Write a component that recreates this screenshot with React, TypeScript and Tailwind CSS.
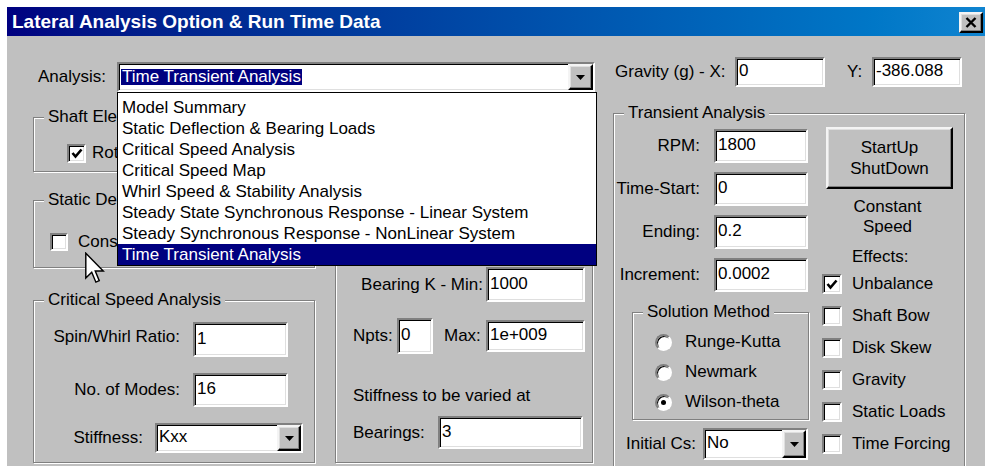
import React from "react";

// win9x style bevels
const sunken =
  "border-2 border-t-[#808080] border-l-[#808080] border-b-white border-r-white shadow-[inset_1px_1px_0_#000,inset_-1px_-1px_0_#dfdfdf]";
const raised =
  "border-2 border-t-[#f4f4f4] border-l-[#f4f4f4] border-b-black border-r-black shadow-[inset_-1px_-1px_0_#808080,inset_1px_1px_0_#dfdfdf]";

const analysisTypes = [
  "Model Summary",
  "Static Deflection & Bearing Loads",
  "Critical Speed Analysis",
  "Critical Speed Map",
  "Whirl Speed & Stability Analysis",
  "Steady State Synchronous Response - Linear System",
  "Steady Synchronous Response - NonLinear System",
  "Time Transient Analysis",
];

const transientFields = [
  ["RPM:", "1800"],
  ["Time-Start:", "0"],
  ["Ending:", "0.2"],
  ["Increment:", "0.0002"],
];

const effects = [
  { label: "Unbalance", checked: true },
  { label: "Shaft Bow", checked: false },
  { label: "Disk Skew", checked: false },
  { label: "Gravity", checked: false },
  { label: "Static Loads", checked: false },
  { label: "Time Forcing", checked: false },
];

function Field({ value, className }: { value: string; className: string }) {
  return (
    <div className={`flex items-center bg-white pl-[2px] pb-[2px] leading-[20px] ${sunken} ${className}`}>
      {value}
    </div>
  );
}

function ArrowButton({ className }: { className: string }) {
  return (
    <div className={`flex items-center justify-center bg-[#c0c0c0] ${raised} ${className}`}>
      <svg width="9" height="5" viewBox="0 0 9 5">
        <path d="M0 0H9L4.5 5Z" fill="black" />
      </svg>
    </div>
  );
}

function Combo({ value, className }: { value: string; className: string }) {
  return (
    <div className={`flex bg-white ${sunken} ${className}`}>
      <span className="flex-1 flex items-center pl-[2px] pb-[2px] leading-[20px]">{value}</span>
      <ArrowButton className="w-[24px] h-full" />
    </div>
  );
}

function Check({ checked, size }: { checked?: boolean; size: string }) {
  return (
    <div className={`flex items-center justify-center bg-white shrink-0 ${sunken} ${size}`}>
      {checked && (
        <svg width="12" height="11" viewBox="0 0 12 11">
          <path d="M1.5 5 L4.5 8.5 L10.5 1.5" fill="none" stroke="black" strokeWidth="2.6" />
        </svg>
      )}
    </div>
  );
}

function Radio({ checked }: { checked?: boolean }) {
  return (
    <div className="flex items-center justify-center w-[17px] h-[17px] rounded-full bg-white border-2 border-t-[#808080] border-l-[#808080] border-b-white border-r-white shadow-[inset_1px_1px_0_#000]">
      {checked && <div className="w-[5px] h-[5px] rounded-full bg-black" />}
    </div>
  );
}

function Group({
  title,
  className,
  children,
}: {
  title?: string;
  className: string;
  children?: React.ReactNode;
}) {
  return (
    <div className={`relative border border-[#808080] shadow-[inset_1px_1px_0_#fff,1px_1px_0_#fff] ${className}`}>
      {title && (
        <span className="absolute left-[10px] -top-[11px] bg-[#c0c0c0] px-[4px] leading-[20px]">{title}</span>
      )}
      {children}
    </div>
  );
}

export default function App() {
  return (
    <div className="w-[985px] h-[466px] bg-white pl-[7px] pt-[7px] overflow-hidden whitespace-nowrap font-['Liberation_Sans',Arial,sans-serif] text-[17px] text-black">
      <div className="flex flex-col w-[978px] h-[459px]">
        {/* title bar */}
        <div className="flex items-center justify-between h-[29px] bg-linear-to-r from-[#000080] to-[#1084d0] pl-[5px] pr-[2px]">
          <span className="text-white font-bold text-[19px] leading-[22px]">
            Lateral Analysis Option &amp; Run Time Data
          </span>
          <div className={`flex items-center justify-center w-[24px] h-[21px] mt-[2px] bg-[#c0c0c0] ${raised}`}>
            <svg width="12" height="11" viewBox="0 0 12 11">
              <path d="M1.5 1 L10.5 10 M10.5 1 L1.5 10" stroke="black" strokeWidth="2.4" />
            </svg>
          </div>
        </div>

        {/* dialog body */}
        <div className="relative flex-1 flex flex-col bg-[#c0c0c0] overflow-hidden">
          <div className="flex items-start pl-[31px] pt-[21px]">
            <span className="w-[79px] mt-[10px] leading-[20px]">Analysis:</span>
            <div className={`flex w-[478px] h-[30px] mt-[5px] bg-white ${sunken}`}>
              <div className="flex-1 flex items-center pl-[2px]">
                <span className="bg-[#000080] text-white leading-[16px] px-[1px]">Time Transient Analysis</span>
              </div>
              <ArrowButton className="w-[25px] h-full" />
            </div>
            <span className="ml-[20px] w-[120px] mt-[5px] leading-[20px]">Gravity (g) - X:</span>
            <Field value="0" className="w-[90px] h-[30px]" />
            <span className="ml-[22px] w-[25px] mt-[5px] leading-[20px]">Y:</span>
            <Field value="-386.088" className="w-[90px] h-[30px]" />
          </div>

          <div className="flex gap-[20px] pl-[26px] mt-[21px] leading-[20px]">
            {/* left column */}
            <div className="flex flex-col w-[282px] pt-[4px] shrink-0">
              <Group title="Shaft Elements" className="h-[55px]">
                <div className="flex items-center gap-[6px] pl-[33px] pt-[25px]">
                  <Check checked size="w-[19px] h-[19px]" />
                  <span className="w-[29px] overflow-hidden">Rotatory Inertia</span>
                </div>
              </Group>
              <Group title="Static Deflection" className="h-[68px] mt-[28px]">
                <div className="flex items-center gap-[10px] pl-[16px] pt-[31px]">
                  <Check size="w-[18px] h-[18px]" />
                  <span className="w-[39px] overflow-hidden">Consider Shear Deformation</span>
                </div>
              </Group>
              <Group title="Critical Speed Analysis" className="h-[163px] mt-[32px]">
                <div className="flex flex-col pt-[21px] pl-[14px]">
                  <div className="flex items-center">
                    <span className="w-[132px] text-right mb-[5px]">Spin/Whirl Ratio:</span>
                    <Field value="1" className="ml-[13px] w-[95px] h-[35px]" />
                  </div>
                  <div className="flex items-center mt-[16px]">
                    <span className="w-[132px] text-right">No. of Modes:</span>
                    <Field value="16" className="ml-[13px] w-[95px] h-[34px]" />
                  </div>
                  <div className="flex items-center mt-[16px]">
                    <span className="w-[95px] text-right">Stiffness:</span>
                    <Combo value="Kxx" className="ml-[12px] w-[148px] h-[30px]" />
                  </div>
                </div>
              </Group>
            </div>

            {/* middle column: critical speed map settings */}
            <Group className="w-[258px] h-[346px] mt-[4px] shrink-0">
              <div className="flex flex-col pl-[17px] pt-[149px]">
                <div className="flex items-center">
                  <span className="w-[130px] text-right">Bearing K - Min:</span>
                  <Field value="1000" className="ml-[3px] w-[99px] h-[35px]" />
                </div>
                <div className="flex items-center mt-[16px]">
                  <span className="w-[41px]">Npts:</span>
                  <Field value="0" className="ml-[3px] w-[36px] h-[36px]" />
                  <span className="ml-[11px] w-[39px]">Max:</span>
                  <Field value="1e+009" className="ml-[3px] w-[99px] h-[32px]" />
                </div>
                <span className="mt-[32px]">Stiffness to be varied at</span>
                <div className="flex items-center mt-[10px]">
                  <span className="w-[85px]">Bearings:</span>
                  <Field value="3" className="w-[145px] h-[33px]" />
                </div>
              </div>
            </Group>

            {/* transient analysis */}
            <Group title="Transient Analysis" className="w-[352px] h-[370px] shrink-0">
              <div className="flex pl-[12px]">
                <div className="flex flex-col w-[183px] pt-[15px]">
                  {transientFields.map(([label, value], i) => (
                    <div key={label} className={`flex items-center justify-end ${i ? "mt-[9px]" : ""}`}>
                      <span>{label}</span>
                      <Field value={value} className="ml-[14px] mr-[1px] w-[94px] h-[34px] shrink-0" />
                    </div>
                  ))}
                  <Group title="Solution Method" className="mt-[20px] ml-[6px] w-[177px] h-[108px]">
                    <div className="flex flex-col pl-[22px] pt-[14px]">
                      {["Runge-Kutta", "Newmark", "Wilson-theta"].map((m) => (
                        <div key={m} className="flex items-center gap-[13px] h-[30px]">
                          <Radio checked={m === "Wilson-theta"} />
                          <span>{m}</span>
                        </div>
                      ))}
                    </div>
                  </Group>
                  <div className="flex items-center mt-[8px]">
                    <span className="w-[77px]">Initial Cs:</span>
                    <Combo value="No" className="w-[105px] h-[32px]" />
                  </div>
                </div>

                <div className="flex flex-col ml-[13px] w-[131px] pt-[13px]">
                  <div className={`flex flex-col items-center justify-center ml-[4px] w-[127px] h-[62px] bg-[#c0c0c0] leading-[21px] ${raised}`}>
                    <span>StartUp</span>
                    <span>ShutDown</span>
                  </div>
                  <div className="flex flex-col items-center mt-[8px]">
                    <span>Constant</span>
                    <span>Speed</span>
                  </div>
                  <span className="ml-[30px] mt-[10px]">Effects:</span>
                  <div className="flex flex-col mt-[1px]">
                    {effects.map((e) => (
                      <div key={e.label} className="flex items-center gap-[10px] h-[32px]">
                        <Check checked={e.checked} size="w-[20px] h-[20px]" />
                        <span>{e.label}</span>
                      </div>
                    ))}
                  </div>
                </div>
              </div>
            </Group>
          </div>

          {/* open analysis dropdown list */}
          <div className="absolute left-[110px] top-[56px] z-10 w-[480px] h-[174px] bg-white border border-black pt-[4px] leading-[21px]">
            {analysisTypes.map((t, i) => (
              <div
                key={t}
                className={`h-[21px] px-[4px] ${i === analysisTypes.length - 1 ? "bg-[#000080] text-white" : ""}`}
              >
                {t}
              </div>
            ))}
          </div>

          {/* mouse pointer */}
          <svg
            className="absolute left-[78px] top-[216px] z-20"
            width="20"
            height="32"
            viewBox="0 0 12.5 19.5"
          >
            <path
              d="M0.5 0.5 V16 L4.2 12.4 L6.8 18.6 L8.9 17.7 L6.4 11.6 H11.4 Z"
              fill="white"
              stroke="black"
              strokeWidth="0.9"
              strokeLinejoin="miter"
            />
          </svg>
        </div>
      </div>
    </div>
  );
}
